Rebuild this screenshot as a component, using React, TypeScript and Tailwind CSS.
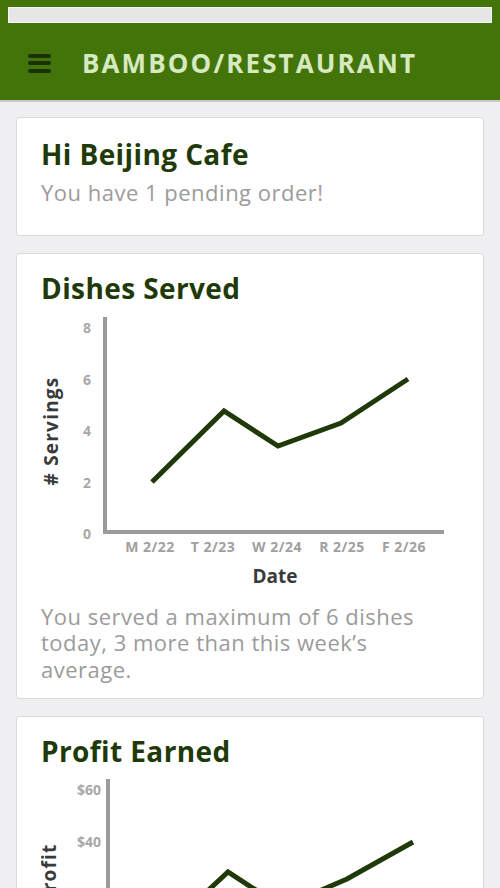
import React from "react";

const FONT = { fontFamily: "'Open Sans', 'DejaVu Sans', sans-serif" };

function DishesChart() {
  const pts = [
    [152, 481],
    [224, 410],
    [278, 445],
    [341, 422],
    [408, 378],
  ];
  const yTicks: [string, number][] = [
    ["8", 327],
    ["6", 379],
    ["4", 430],
    ["2", 482],
    ["0", 533],
  ];
  const xLabels: [string, number][] = [
    ["M 2/22", 150],
    ["T 2/23", 213],
    ["W 2/24", 277],
    ["R 2/25", 342],
    ["F 2/26", 404],
  ];
  return (
    <svg width="418" height="294" viewBox="41 308 418 294" className="block mt-[3px]" style={FONT}>
      <rect x="103" y="316" width="4" height="217" fill="#9b9b9b" />
      <rect x="103" y="529" width="341" height="4" fill="#9b9b9b" />
      {yTicks.map(([t, y]) => (
        <text key={t} x="87" y={y + 5} textAnchor="middle" fontSize="14" fontWeight="700" fill="#a8a8a8">
          {t}
        </text>
      ))}
      {xLabels.map(([t, x]) => (
        <text
          key={t}
          x={x}
          y="551"
          textAnchor="middle"
          fontSize="14"
          fontWeight="700"
          letterSpacing="0.5"
          fill="#a0a0a0"
        >
          {t}
        </text>
      ))}
      <text x="275" y="582" textAnchor="middle" fontSize="19" fontWeight="700" fill="#3a3a3a">
        Date
      </text>
      <text
        x="0"
        y="0"
        transform="translate(58 430) rotate(-90)"
        textAnchor="middle"
        fontSize="19"
        fontWeight="700"
        letterSpacing="1.2"
        fill="#3a3a3a"
      >
        # Servings
      </text>
      <polyline
        points={pts.map((p) => p.join(",")).join(" ")}
        fill="none"
        stroke="#1f3a08"
        strokeWidth="5"
        strokeLinejoin="miter"
      />
    </svg>
  );
}

function ProfitChart() {
  const pts = [
    [156, 940],
    [228, 873],
    [282, 908],
    [347, 880],
    [413, 843],
  ];
  const yTicks: [string, number][] = [
    ["$60", 791],
    ["$40", 843],
    ["$20", 895],
    ["$0", 947],
  ];
  const xLabels: [string, number][] = [
    ["M 2/22", 153],
    ["T 2/23", 216],
    ["W 2/24", 280],
    ["R 2/25", 345],
    ["F 2/26", 407],
  ];
  return (
    <svg width="418" height="300" viewBox="41 772 418 300" className="block mt-[2px]" style={FONT}>
      <rect x="106" y="780" width="4" height="170" fill="#9b9b9b" />
      <rect x="106" y="946" width="338" height="4" fill="#9b9b9b" />
      {yTicks.map(([t, y]) => (
        <text key={t} x="89" y={y + 5} textAnchor="middle" fontSize="14" fontWeight="700" fill="#a8a8a8">
          {t}
        </text>
      ))}
      {xLabels.map(([t, x]) => (
        <text
          key={t}
          x={x}
          y="968"
          textAnchor="middle"
          fontSize="14"
          fontWeight="700"
          letterSpacing="0.5"
          fill="#a0a0a0"
        >
          {t}
        </text>
      ))}
      <text x="278" y="999" textAnchor="middle" fontSize="19" fontWeight="700" fill="#3a3a3a">
        Date
      </text>
      <text
        x="0"
        y="0"
        transform="translate(56 875) rotate(-90)"
        textAnchor="middle"
        fontSize="19"
        fontWeight="700"
        letterSpacing="1.2"
        fill="#3a3a3a"
      >
        Profit
      </text>
      <polyline
        points={pts.map((p) => p.join(",")).join(" ")}
        fill="none"
        stroke="#1f3a08"
        strokeWidth="5"
      />
    </svg>
  );
}

export default function App() {
  return (
    <div className="min-h-screen bg-[#f0f0f2]" style={FONT}>
      <header className="h-[102px] bg-[#43740a] flex flex-col border-b-2 border-[#c8c8c8]">
        <div className="mx-2 mt-[7px] h-[16px] bg-[#e6e6e6] border border-[#f4f4f4]" />
        <div className="flex items-center pl-[28px] mt-[24px]">
          <div className="flex flex-col gap-[3.5px] w-[23px]">
            <span className="block h-[4px] rounded-full bg-[#1a3006]" />
            <span className="block h-[4px] rounded-full bg-[#1a3006]" />
            <span className="block h-[4px] rounded-full bg-[#1a3006]" />
          </div>
          <h1 className="ml-[31px] text-[26px] leading-[32px] font-bold tracking-[2.1px] text-[#d6e9c0]">
            BAMBOO/RESTAURANT
          </h1>
        </div>
      </header>

      <main className="flex flex-col gap-[17px] px-4 pt-[15px] pb-6">
        <section className="bg-white border border-[#dadada] rounded-[3px] px-[24px] pt-[20px] pb-[30px]">
          <h2 className="text-[28px] leading-[1.2] font-bold tracking-[0.4px] text-[#1f3a08]">Hi Beijing Cafe</h2>
          <p className="mt-[7px] text-[22px] leading-[1.2] tracking-[0.5px] text-[#9b9b9b]">
            You have 1 pending order!
          </p>
        </section>

        <section className="bg-white border border-[#dadada] rounded-[3px] px-[24px] pt-[18px] pb-[16px]">
          <h2 className="text-[28px] leading-[1.2] font-bold tracking-[0.4px] text-[#1f3a08]">Dishes Served</h2>
          <DishesChart />
          <p className="text-[22px] leading-[26.5px] tracking-[0.5px] text-[#9b9b9b]">
            You served a maximum of 6 dishes today, 3 more than this week’s average.
          </p>
        </section>

        <section className="bg-white border border-[#dadada] rounded-[3px] px-[24px] pt-[18px] pb-[16px]">
          <h2 className="text-[28px] leading-[1.2] font-bold tracking-[0.4px] text-[#1f3a08]">Profit Earned</h2>
          <ProfitChart />
          <p className="text-[22px] leading-[26.5px] tracking-[0.5px] text-[#9b9b9b]">
            You earned $40 today, $12 more than this week’s average.
          </p>
        </section>
      </main>
    </div>
  );
}
